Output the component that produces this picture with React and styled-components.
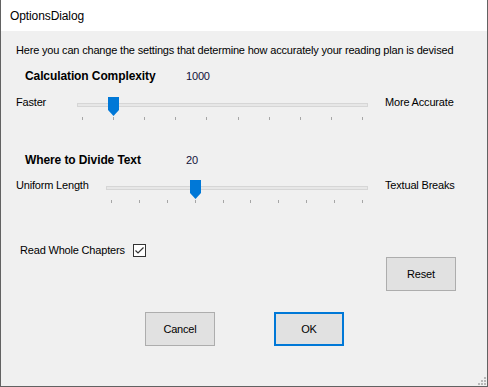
import styled, { createGlobalStyle } from "styled-components";

const GlobalStyle = createGlobalStyle`
  html, body {
    margin: 0;
    padding: 0;
    background: #f0f0f0;
  }
  body {
    font-family: "Liberation Sans", Arial, sans-serif;
    font-size: 11px;
    letter-spacing: -0.18px;
    color: #000;
  }
`;

const Window = styled.div`
  position: relative;
  width: 488px;
  height: 387px;
  box-sizing: border-box;
  border: 1px solid #626262;
  border-top: none;
  background: #f0f0f0;
  display: flex;
  flex-direction: column;
  overflow: hidden;
`;

const TitleBar = styled.div`
  height: 31px;
  flex: none;
  box-sizing: border-box;
  padding: 8px 0 0 9px;
  background: #fff;
  font-size: 12px;
  line-height: 16px;
  letter-spacing: -0.1px;
`;

const Body = styled.div`
  flex: 1;
  padding: 12px 0 0 15px;
  display: flex;
  flex-direction: column;
  line-height: 14px;
`;

const Intro = styled.div`
  white-space: nowrap;
`;

const Header = styled.div`
  display: flex;
  margin-top: ${(p) => p.$top}px;
  padding-left: 9px;
`;

const HeaderLabel = styled.div`
  width: 161px;
  font-weight: bold;
  font-size: 12px;
  letter-spacing: -0.1px;
`;

const HeaderValue = styled.div`
  color: #10103a;
`;

const SliderRow = styled.div`
  display: flex;
  align-items: flex-start;
  margin-top: ${(p) => p.$top}px;
`;

const SideLabel = styled.div`
  width: ${(p) => p.$width}px;
  flex: none;
  white-space: nowrap;
`;

const EndLabel = styled.div`
  margin-left: 17px;
  white-space: nowrap;
`;

const SliderBox = styled.div`
  position: relative;
  flex: none;
  width: ${(p) => p.$width}px;
  height: 23px;
  margin-top: 2px;
`;

const Track = styled.div`
  margin-top: 6px;
  height: 4px;
  box-sizing: border-box;
  background: #e7e7e7;
  border: 1px solid #d6d6d6;
`;

const Ticks = styled.div`
  display: flex;
  justify-content: space-between;
  padding: 0 5px;
  margin-top: 10px;
`;

const Tick = styled.span`
  width: 1px;
  height: 3px;
  background: #a6a6a6;
`;

const Thumb = styled.div`
  position: absolute;
  top: 0;
  width: 11px;
  height: 19px;
  background: #0078d7;
  clip-path: polygon(0 0, 100% 0, 100% 68%, 50% 100%, 0 68%);
`;

const CheckRow = styled.div`
  display: flex;
  align-items: center;
  margin-top: 40px;
  padding-left: 4px;
`;

const CheckLabel = styled.div`
  width: 113px;
`;

const CheckBox = styled.div`
  width: 13px;
  height: 13px;
  box-sizing: border-box;
  border: 1px solid #333;
  background: #fff;
  display: flex;
  align-items: center;
  justify-content: center;
`;

const ResetRow = styled.div`
  display: flex;
  justify-content: flex-end;
  padding-right: 31px;
`;

const ButtonRow = styled.div`
  display: flex;
  gap: 59px;
  margin-top: 21px;
  padding-left: 129px;
`;

const Button = styled.button`
  width: 70px;
  height: 34px;
  box-sizing: border-box;
  padding: 0;
  background: #e1e1e1;
  border: ${(p) => (p.$default ? "2px solid #0078d7" : "1px solid #adadad")};
  font-family: "Liberation Sans", Arial, sans-serif;
  font-size: 11px;
  letter-spacing: -0.18px;
  color: #000;
`;

const Grip = styled.svg`
  position: absolute;
  right: 1px;
  bottom: 1px;
`;

const Slider = ({ width, index, ticks = 10 }) => {
  const step = (width - 11) / (ticks - 1);
  return (
    <SliderBox $width={width}>
      <Track />
      <Ticks>
        {Array.from({ length: ticks }).map((_, i) => (
          <Tick key={i} />
        ))}
      </Ticks>
      <Thumb style={{ left: Math.round(index * step) }} />
    </SliderBox>
  );
};

export default function App() {
  return (
    <>
      <GlobalStyle />
      <Window>
        <TitleBar>OptionsDialog</TitleBar>
        <Body>
          <Intro>
            Here you can change the settings that determine how accurately your reading plan is devised
          </Intro>

          <Header $top={12}>
            <HeaderLabel>Calculation Complexity</HeaderLabel>
            <HeaderValue>1000</HeaderValue>
          </Header>
          <SliderRow $top={12}>
            <SideLabel $width={61}>Faster</SideLabel>
            <Slider width={291} index={1} />
            <EndLabel>More Accurate</EndLabel>
          </SliderRow>

          <Header $top={33}>
            <HeaderLabel>Where to Divide Text</HeaderLabel>
            <HeaderValue>20</HeaderValue>
          </Header>
          <SliderRow $top={11}>
            <SideLabel $width={90}>Uniform Length</SideLabel>
            <Slider width={262} index={3} />
            <EndLabel>Textual Breaks</EndLabel>
          </SliderRow>

          <CheckRow>
            <CheckLabel>Read Whole Chapters</CheckLabel>
            <CheckBox>
              <svg width="11" height="11" viewBox="0 0 11 11">
                <path d="M1.5 5.5 L4 8 L9.5 2.5" fill="none" stroke="#333" strokeWidth="1.2" />
              </svg>
            </CheckBox>
          </CheckRow>

          <ResetRow>
            <Button>Reset</Button>
          </ResetRow>

          <ButtonRow>
            <Button>Cancel</Button>
            <Button $default>OK</Button>
          </ButtonRow>
        </Body>

        <Grip width="10" height="10" viewBox="0 0 10 10">
          <g fill="#b8b8b8">
            <rect x="8" y="2" width="2" height="2" />
            <rect x="5" y="5" width="2" height="2" />
            <rect x="8" y="5" width="2" height="2" />
            <rect x="2" y="8" width="2" height="2" />
            <rect x="5" y="8" width="2" height="2" />
            <rect x="8" y="8" width="2" height="2" />
          </g>
        </Grip>
      </Window>
    </>
  );
}
